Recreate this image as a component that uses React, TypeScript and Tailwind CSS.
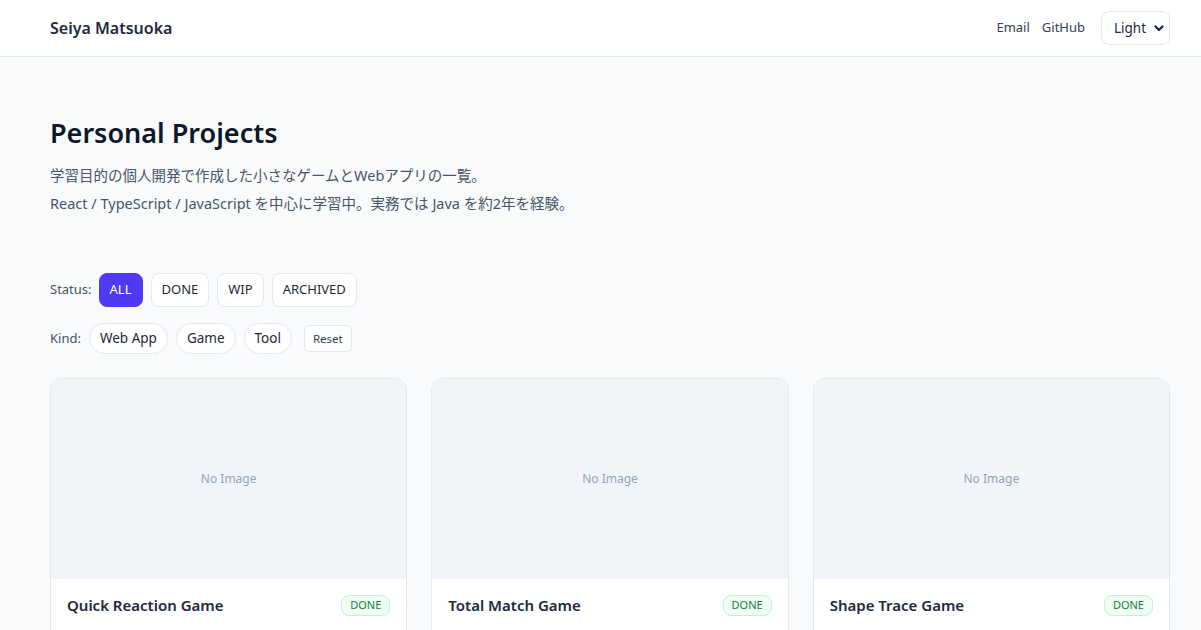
import { useState } from 'react'

type Project = {
  title: string
  status: 'DONE' | 'WIP' | 'ARCHIVED'
}

const projects: Project[] = [
  { title: 'Quick Reaction Game', status: 'DONE' },
  { title: 'Total Match Game', status: 'DONE' },
  { title: 'Shape Trace Game', status: 'DONE' },
]

const statuses = ['ALL', 'DONE', 'WIP', 'ARCHIVED']
const kinds = ['Web App', 'Game', 'Tool']

export default function App() {
  const [status, setStatus] = useState('ALL')

  return (
    <div className="min-h-screen bg-[#f8fafc] text-[#1e293b] font-['Noto_Sans','Noto_Sans_CJK_JP',sans-serif]">
      {/* Header */}
      <header className="h-[57px] bg-white border-b border-[#e2e8f0]">
        <div className="h-14 pl-[50px] pr-[31px] flex items-center justify-between">
          <span className="text-[16px] font-semibold text-[#1e293b]">Seiya Matsuoka</span>
          <nav className="flex items-center gap-3 text-[13px] text-[#334155]">
            <a>Email</a>
            <a>GitHub</a>
            <div className="ml-1 h-[34px] w-[69px] rounded-lg border border-[#e2e8f0] bg-white flex items-center justify-between pl-[12px] pr-[5px]">
              <span className="text-[13.5px] text-[#1e293b]">Light</span>
              <svg width="10" height="7" viewBox="0 0 10 7" className="mt-[1px]">
                <path d="M1.5 1.5 L5 5 L8.5 1.5" fill="none" stroke="#1e293b" strokeWidth="2.2" strokeLinecap="round" strokeLinejoin="round" />
              </svg>
            </div>
          </nav>
        </div>
      </header>

      <main className="pl-[50px] pr-[31px] pt-[58px]">
        <h1 className="text-[27px] leading-9 font-semibold text-[#0f172a]">Personal Projects</h1>
        <div className="mt-[10px] text-[14.5px] leading-7 text-[#475569]">
          <p>学習目的の個人開発で作成した小さなゲームとWebアプリの一覧。</p>
          <p>React / TypeScript / JavaScript を中心に学習中。実務では Java を約2年を経験。</p>
        </div>

        {/* Filters */}
        <div className="mt-[56px] flex items-center gap-2 text-[13px] text-[#475569]">
          <span className="mr-[-1px]">Status:</span>
          {statuses.map(s => (
            <button
              key={s}
              onClick={() => setStatus(s)}
              className={
                s === status
                  ? 'h-[34px] px-[10px] rounded-lg bg-[#4f39f6] border border-[#4f39f6] text-white text-[13px]'
                  : 'h-[34px] px-[10px] rounded-lg bg-white border border-[#e2e8f0] text-[#1e293b] text-[13px]'
              }
            >
              {s}
            </button>
          ))}
        </div>
        <div className="mt-4 flex items-center gap-2 text-[13px] text-[#475569]">
          <span>Kind:</span>
          {kinds.map(k => (
            <button key={k} className="h-[31px] px-[10px] rounded-full bg-white border border-[#e2e8f0] text-[13.5px] text-[#1e293b]">
              {k}
            </button>
          ))}
          <button className="ml-1 h-[27px] px-[8px] rounded-md bg-white border border-[#e2e8f0] text-[11.5px] text-[#334155]">
            Reset
          </button>
        </div>

        {/* Cards */}
        <div className="mt-6 grid grid-cols-3 gap-6">
          {projects.map(p => (
            <div key={p.title} className="rounded-xl border border-[#e2e8f0] bg-white overflow-hidden">
              <div className="h-[200px] bg-[#f1f5f9] flex items-center justify-center text-[12px] text-[#94a3b8]">
                No Image
              </div>
              <div className="px-4 pt-[15px] pb-4 flex items-center justify-between">
                <h3 className="text-[15px] font-semibold text-[#1e293b]">{p.title}</h3>
                <span className="h-[21px] px-[8px] rounded-lg border border-[#bbf7d0] bg-[#f0fdf4] text-[11px] text-[#15803d] flex items-center">
                  {p.status}
                </span>
              </div>
              <div className="h-20" />
            </div>
          ))}
        </div>
      </main>
    </div>
  )
}
